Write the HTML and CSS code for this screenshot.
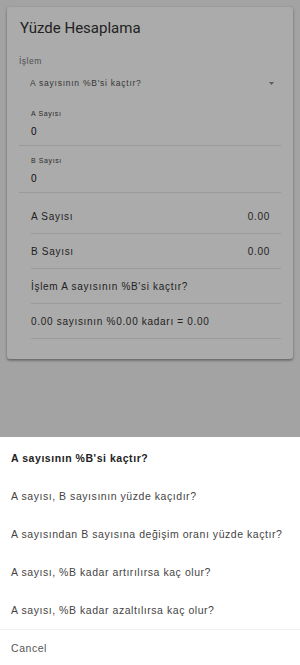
FILE: index.html
```html
<!DOCTYPE html>
<html lang="tr">
  <head>
    <meta charset="UTF-8" />
    <meta name="viewport" content="width=device-width, initial-scale=1.0" />
    <title>Yüzde Hesaplama</title>
    <link rel="stylesheet" href="styles.css">
  </head>
  <body>
    <div class="card">
      <h1 class="title">Yüzde Hesaplama</h1>
      <p class="label">İşlem</p>
      <div class="select">
        <span>A sayısının %B'si kaçtır?</span>
        <svg class="arrow" width="5" height="3" viewBox="0 0 5 3">
          <path d="M0 0 L5 0 L2.5 3 Z" fill="#888" />
        </svg>
      </div>

      <div class="field">
        <span class="field-label">A Sayısı</span>
        <span class="field-value">0</span>
      </div>
      <div class="field">
        <span class="field-label">B Sayısı</span>
        <span class="field-value">0</span>
      </div>

      <div class="results">
        <div class="row">
          <span>A Sayısı</span>
          <span>0.00</span>
        </div>
        <div class="row">
          <span>B Sayısı</span>
          <span>0.00</span>
        </div>
        <div class="row">
          <span>İşlem A sayısının %B'si kaçtır?</span>
        </div>
        <div class="row">
          <span>0.00 sayısının %0.00 kadarı = 0.00</span>
        </div>
      </div>
    </div>

    <div class="scrim"></div>

    <div class="sheet">
      <div class="option selected">A sayısının %B'si kaçtır?</div>
      <div class="option">A sayısı, B sayısının yüzde kaçıdır?</div>
      <div class="option">A sayısından B sayısına değişim oranı yüzde kaçtır?</div>
      <div class="option">A sayısı, %B kadar artırılırsa kaç olur?</div>
      <div class="option">A sayısı, %B kadar azaltılırsa kaç olur?</div>
      <div class="option cancel">Cancel</div>
    </div>
  </body>
</html>
```

FILE: styles.css
```css
body {
  margin: 0;
  height: 665px;
  background-color: #f3f3f3;
  font-family: "Liberation Sans", Arial, sans-serif;
  color: #2a2a2a;
  overflow: hidden;
}

p,
h1 {
  margin: 0;
}

.card {
  margin: 7px;
  padding: 0 12px 20px;
  background: #fff;
  border-radius: 3px;
  box-shadow: 0 1px 3px rgba(0, 0, 0, 0.3), 0 2px 2px rgba(0, 0, 0, 0.15);
}

.title {
  padding: 12px 0 0 1px;
  font-family: Roboto, "Liberation Sans", sans-serif;
  font-size: 15px;
  line-height: 18px;
  font-weight: 400;
  color: #333;
}

.label {
  margin-top: 18px;
  font-size: 8.5px;
  line-height: 12px;
  letter-spacing: 0.5px;
  color: #777;
}

.select {
  display: flex;
  align-items: center;
  justify-content: space-between;
  height: 32px;
  padding: 0 7px 0 11px;
  font-size: 8.5px;
  letter-spacing: 0.75px;
  color: #555;
}

.arrow {
  display: block;
}

.field {
  display: flex;
  flex-direction: column;
  padding: 10px 0 5px 12px;
  border-bottom: 1px solid #e6e6e6;
}

.field-label {
  font-size: 7px;
  line-height: 10px;
  letter-spacing: 0.6px;
  color: #444;
}

.field-value {
  margin-top: 5px;
  font-size: 10px;
  line-height: 16px;
  color: #111;
}

.results {
  margin: 6px 0 0 12px;
}

.row {
  display: flex;
  justify-content: space-between;
  align-items: center;
  height: 34px;
  padding-right: 11px;
  border-bottom: 1px solid #e6e6e6;
  font-size: 10px;
  letter-spacing: 0.7px;
  color: #333;
}

.scrim {
  position: fixed;
  inset: 0;
  background: rgba(0, 0, 0, 0.33);
}

.sheet {
  position: fixed;
  left: 0;
  right: 0;
  bottom: 0;
  height: 228px;
  padding-top: 2px;
  background: #fff;
  box-sizing: border-box;
}

.option {
  display: flex;
  align-items: center;
  height: 38px;
  padding-left: 11px;
  font-size: 10.5px;
  letter-spacing: 0.55px;
  color: #444;
}

.option.selected {
  font-weight: 700;
  color: #222;
}

.option.cancel {
  height: 36px;
  border-top: 1px solid #f0f0f0;
  color: #555;
}
```
